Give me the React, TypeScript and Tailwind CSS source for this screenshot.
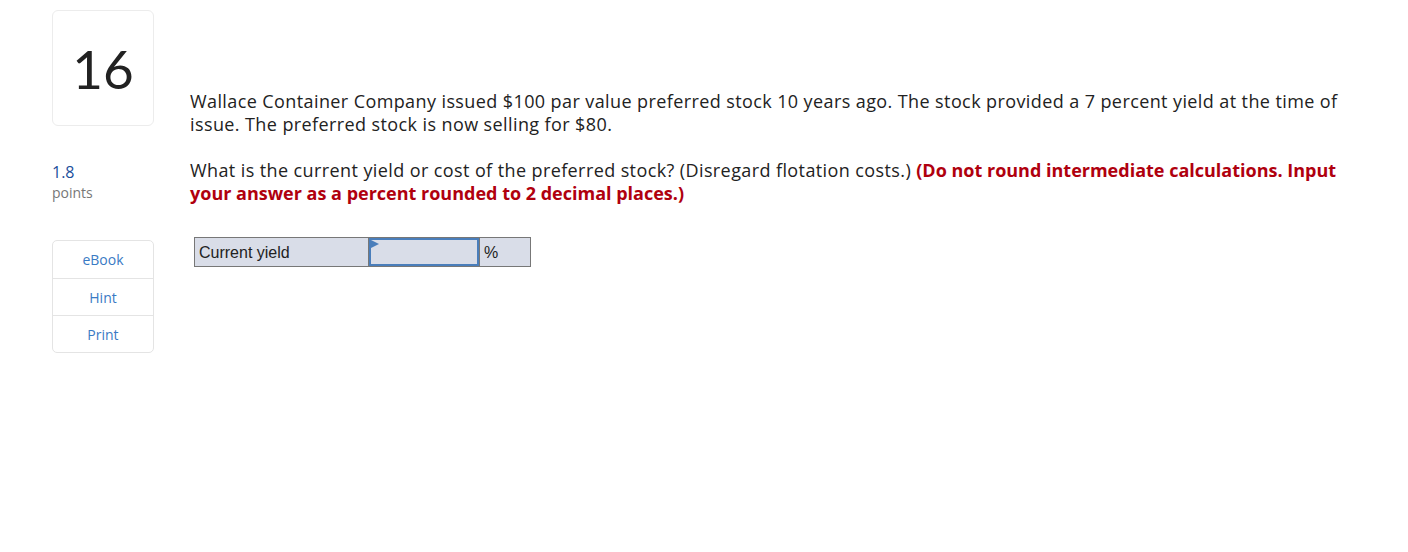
const FONT = 'font-["Open_Sans","Lato",sans-serif]'

function QuestionNumber({ number }: { number: number }) {
  return (
    <div className="flex h-[116px] w-[102px] items-center justify-center rounded-[6px] border border-[#ececec] bg-white">
      <span className="font-['Lato',sans-serif] text-[53px] leading-none text-[#222]">{number}</span>
    </div>
  )
}

const TOOLS = ['eBook', 'Hint', 'Print']

export default function App() {
  return (
    <div className={`${FONT} min-h-[552px] bg-white text-[#222]`}>
      <div className="flex gap-[36px] pl-[52px] pt-[10px]">
        <div className="flex w-[102px] shrink-0 flex-col">
          <QuestionNumber number={16} />
          <div className="mt-[36px] text-[16px] leading-[20px] text-[#1c4f9c]">1.8</div>
          <div className="mt-[2px] text-[14px] leading-[18px] text-[#777]">points</div>
          <ul className="mt-[38px] overflow-hidden rounded-[5px] border border-[#e4e4e4]">
            {TOOLS.map((t, i) => (
              <li
                key={t}
                className={`flex h-[37px] items-center justify-center text-[14px] text-[#3a7ac4] ${
                  i > 0 ? 'border-t border-[#e4e4e4]' : ''
                }`}
              >
                {t}
              </li>
            ))}
          </ul>
        </div>

        <div className="pt-[80px] text-[18px] leading-[23px] tracking-[0.4px]">
          <p>
            Wallace Container Company issued $100 par value preferred stock 10 years ago. The stock
            provided a 7 percent yield at the time of
            <br />
            issue. The preferred stock is now selling for $80.
          </p>
          <p className="mt-[23px]">
            What is the current yield or cost of the preferred stock? (Disregard flotation costs.){' '}
            <span className="font-bold tracking-normal text-[#b0000e]">
              (Do not round intermediate calculations. Input
              <br />
              your answer as a percent rounded to 2 decimal places.)
            </span>
          </p>

          <div className="ml-[4px] mt-[32px] flex h-[30px] w-[337px] border border-[#777] bg-[#d9dde8] font-['Liberation_Sans',Arial,sans-serif] text-[16px] tracking-normal text-[#222]">
            <div className="flex w-[174px] items-center border-r border-[#777] pl-[4px]">
              Current yield
            </div>
            <div className="relative w-[110px] border-2 border-[#4a7ebb]">
              <svg className="absolute left-0 top-0" width="8" height="8" viewBox="0 0 8 8">
                <polygon points="0,0 8,4 0,8" fill="#4a7ebb" />
              </svg>
            </div>
            <div className="flex flex-1 items-center border-l border-[#777] pl-[4px]">%</div>
          </div>
        </div>
      </div>
    </div>
  )
}
